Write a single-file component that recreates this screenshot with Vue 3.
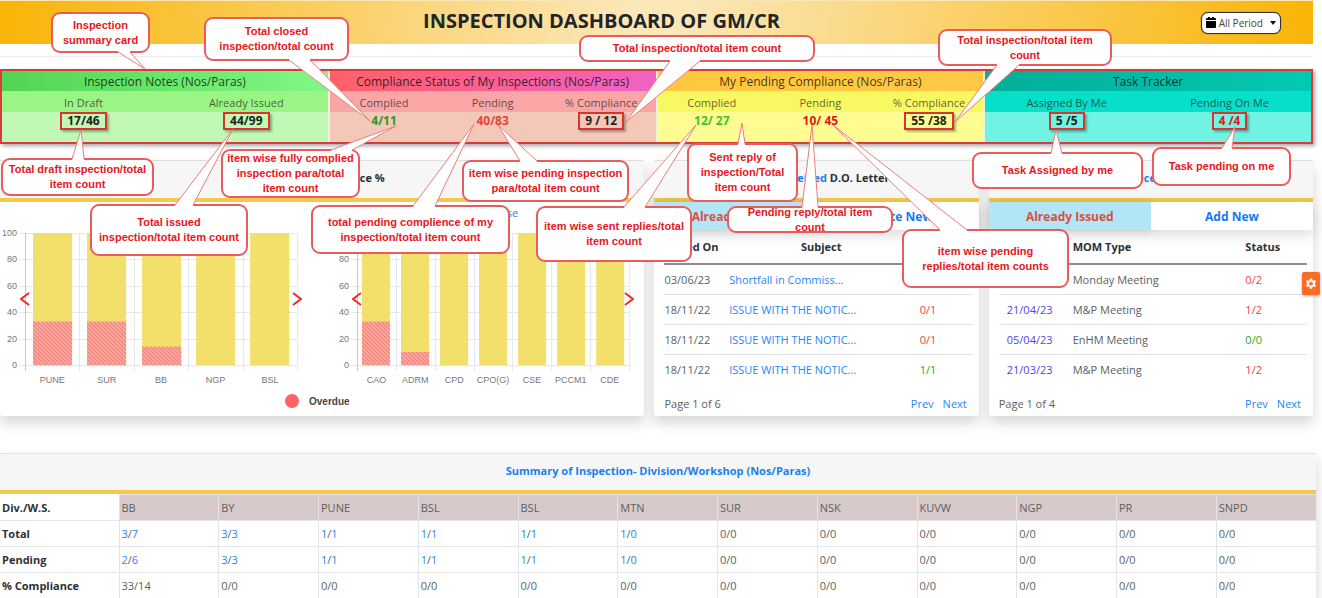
<script setup>
const cards = [
  {
    title: 'Inspection Notes (Nos/Paras)', tone: 'green',
    items: [
      { label: 'In Draft', value: '17/46', boxed: true },
      { label: 'Already Issued', value: '44/99', boxed: true },
    ],
  },
  {
    title: 'Compliance Status of My Inspections (Nos/Paras)', tone: 'pink',
    items: [
      { label: 'Complied', value: '4/11', color: 'good' },
      { label: 'Pending', value: '40/83', color: 'soft' },
      { label: '% Compliance', value: '9 / 12', boxed: true },
    ],
  },
  {
    title: 'My Pending Compliance (Nos/Paras)', tone: 'yellow',
    items: [
      { label: 'Complied', value: '12/ 27', color: 'lime' },
      { label: 'Pending', value: '10/ 45', color: 'bad' },
      { label: '% Compliance', value: '55 /38', boxed: true },
    ],
  },
  {
    title: 'Task Tracker', tone: 'teal',
    items: [
      { label: 'Assigned By Me', value: '5 /5', boxed: true },
      { label: 'Pending On Me', value: '4 /4', boxed: true, color: 'bad' },
    ],
  },
]

const plot = { left: 25, width: 272, top: 31, height: 132 }
const ticks = [100, 80, 60, 40, 20, 0]
const yOf = (v) => plot.top + plot.height * (1 - v / 100)

function makeChart(id, title, entries) {
  const step = plot.width / entries.length
  const barWidth = Math.round(step * 0.72)
  return {
    id,
    title,
    bars: entries.map(([label, overdue], i) => ({
      label,
      overdue,
      mid: plot.left + step * (i + 0.5),
      x: Math.round(plot.left + step * (i + 0.5) - barWidth / 2),
      w: barWidth,
    })),
    lines: Array.from({ length: entries.length + 1 }, (_, i) => Math.round(plot.left + step * i)),
  }
}

const charts = [
  makeChart('division', '', [['PUNE', 33], ['SUR', 33], ['BB', 14], ['NGP', 0], ['BSL', 0]]),
  makeChart('dept', 'Dept Wise', [['CAO', 33], ['ADRM', 10], ['CPD', 0], ['CPO(G)', 0], ['CSE', 0], ['PCCM1', 0], ['CDE', 0]]),
]

const letters = [
  { date: '03/06/23', subject: 'Shortfall in Commiss...', status: '', color: 'red' },
  { date: '18/11/22', subject: 'ISSUE WITH THE NOTIC...', status: '0/1', color: 'red' },
  { date: '18/11/22', subject: 'ISSUE WITH THE NOTIC...', status: '0/1', color: 'red' },
  { date: '18/11/22', subject: 'ISSUE WITH THE NOTIC...', status: '1/1', color: 'grn' },
]
const meetings = [
  { date: '', type: 'Monday Meeting', status: '0/2', color: 'red' },
  { date: '21/04/23', type: 'M&P Meeting', status: '1/2', color: 'red' },
  { date: '05/04/23', type: 'EnHM Meeting', status: '0/0', color: 'grn' },
  { date: '21/03/23', type: 'M&P Meeting', status: '1/2', color: 'red' },
]

const divisions = ['BB', 'BY', 'PUNE', 'BSL', 'BSL', 'MTN', 'SUR', 'NSK', 'KUVW', 'NGP', 'PR', 'SNPD']
const zeros = (n) => Array(n).fill('0/0')
const summary = [
  { name: 'Total', links: 6, cells: ['3/7', '3/3', '1/1', '1/1', '1/1', '1/0', ...zeros(6)] },
  { name: 'Pending', links: 6, cells: ['2/6', '3/3', '1/1', '1/1', '1/1', '1/0', ...zeros(6)] },
  { name: '% Compliance', links: 0, cells: ['33/14', ...zeros(11)] },
]

// box: left, top, right, bottom; tail: base start x, base end x, tip x, tip y
const notes = [
  { lines: ['Inspection', 'summary card'], box: [51, 12, 150, 53], tail: [118, 130, 145, 69] },
  { lines: ['Total closed', 'inspection/total count'], box: [204, 17, 349, 61], tail: [289, 310, 370, 121] },
  { lines: ['Total inspection/total item count'], box: [579, 35, 815, 62], tail: [670, 700, 626, 122] },
  { lines: ['Total inspection/total item', 'count'], box: [938, 29, 1112, 66], tail: [997, 1019, 955, 122] },
  { lines: ['Total draft inspection/total', 'item count'], box: [1, 158, 154, 196], tail: [72, 84, 81, 130], up: true },
  { lines: ['item wise fully complied', 'inspection para/total', 'item count'], box: [221, 149, 360, 198], tail: [331, 352, 396, 126], up: true },
  { lines: ['Total issued', 'inspection/total item count'], box: [90, 204, 248, 256], tail: [175, 193, 233, 129], up: true },
  { lines: ['total pending complience of my', 'inspection/total item count'], box: [311, 205, 510, 254], tail: [413, 435, 474, 124], up: true },
  { lines: ['item wise pending inspection', 'para/total item count'], box: [462, 160, 629, 202], tail: [520, 537, 498, 125], up: true },
  { lines: ['item wise sent replies/total', 'item count'], box: [536, 206, 692, 262], tail: [624, 645, 696, 125], up: true },
  { lines: ['Sent reply of', 'inspection/Total', 'item count'], box: [687, 143, 798, 202], tail: [738, 745, 742, 123], up: true },
  { lines: ['Pending reply/total item', 'count'], box: [727, 206, 893, 233], tail: [802, 818, 812, 125], up: true },
  { lines: ['item wise pending', 'replies/total item counts'], box: [902, 229, 1069, 288], tail: [940, 967, 833, 125], up: true },
  { lines: ['Task Assigned by me'], box: [972, 152, 1143, 189], tail: [1051, 1062, 1056, 130], up: true },
  { lines: ['Task pending on me'], box: [1152, 147, 1291, 186], tail: [1222, 1232, 1235, 127], up: true },
]
const boxStyle = ({ box: [l, t, r, b] }) => ({ left: `${l}px`, top: `${t}px`, width: `${r - l}px`, height: `${b - t}px` })
const baseY = (n) => (n.up ? n.box[1] + 1 : n.box[3] - 1)
const tailFill = (n) => {
  const y = baseY(n)
  const inner = n.up ? y + 2 : y - 2
  const [a, b, tx, ty] = n.tail
  return `${a},${inner} ${a},${y} ${tx},${ty} ${b},${y} ${b},${inner}`
}
const tailLine = (n) => {
  const [a, b, tx, ty] = n.tail
  return `${a},${baseY(n)} ${tx},${ty} ${b},${baseY(n)}`
}
</script>

<template>
  <div class="page">
    <header class="banner">
      <h1>INSPECTION DASHBOARD OF GM/CR</h1>
      <button type="button" class="period">
        <svg width="10" height="11" viewBox="0 0 10 11" aria-hidden="true">
          <path d="M2 0h2v1h2V0h2v1h1a1 1 0 0 1 1 1v1H0V2a1 1 0 0 1 1-1h1zM0 4h10v6a1 1 0 0 1-1 1H1a1 1 0 0 1-1-1z" />
        </svg>
        <span>All Period</span>
        <i class="caret"></i>
      </button>
    </header>
    <hr class="rule" />

    <section class="cards">
      <article v-for="c in cards" :key="c.title" class="card" :class="c.tone">
        <h2>{{ c.title }}</h2>
        <dl>
          <div v-for="it in c.items" :key="it.label" class="stat">
            <dt>{{ it.label }}</dt>
            <dd><span :class="[it.color, { boxed: it.boxed }]">{{ it.value }}</span></dd>
          </div>
        </dl>
      </article>
    </section>

    <main class="panels">
      <section class="panel">
        <h3 class="plain">Compliance %</h3>
        <div class="charts">
          <div v-for="ch in charts" :key="ch.id" class="chart">
            <svg viewBox="0 0 312 184" aria-hidden="true">
              <defs>
                <pattern :id="'hatch-' + ch.id" width="4" height="4" patternUnits="userSpaceOnUse">
                  <rect width="4" height="4" fill="#ff7f84" />
                  <path d="M-1 -1L5 5M-1 3L1 5M3 -1L5 1" stroke="#f6c0a4" stroke-width="1" />
                </pattern>
              </defs>
              <text v-if="ch.title" class="chart-title" x="160" y="15">{{ ch.title }}</text>
              <g v-for="t in ticks" :key="t">
                <line x1="19" x2="297" :y1="Math.round(yOf(t)) + 0.5" :y2="Math.round(yOf(t)) + 0.5" class="grid" />
                <text class="tick" x="17" :y="yOf(t) + 3">{{ t }}</text>
              </g>
              <line v-for="(x, i) in ch.lines" :key="x" :x1="x + 0.5" :x2="x + 0.5" y1="31" y2="169" class="grid" :class="{ axis: i === 0 }" />
              <g v-for="b in ch.bars" :key="b.label">
                <rect :x="b.x" :y="31" :width="b.w" height="132" fill="#f2df6c" />
                <rect :x="b.x" :y="yOf(b.overdue)" :width="b.w" :height="163 - yOf(b.overdue)" :fill="`url(#hatch-${ch.id})`" />
                <text class="cat" :x="b.mid" y="181">{{ b.label }}</text>
              </g>
            </svg>
            <button type="button" class="nav prev" aria-label="Previous">
              <svg width="10" height="14" viewBox="0 0 10 14"><path d="M9 1L1 7l8 6" /></svg>
            </button>
            <button type="button" class="nav next" aria-label="Next">
              <svg width="10" height="14" viewBox="0 0 10 14"><path d="M1 1l8 6-8 6" /></svg>
            </button>
          </div>
        </div>
        <p class="legend"><i></i><span>Overdue</span></p>
      </section>

      <section class="panel">
        <h3><a href="#">Issued</a>/<a href="#">Received</a> D.O. Letters</h3>
        <nav class="tabs">
          <button type="button" class="on">Already Issued</button>
          <button type="button">Create New</button>
        </nav>
        <div class="body">
          <table class="list letters">
            <thead>
              <tr><th>Issued On</th><th class="mid">Subject</th><td></td></tr>
            </thead>
            <tbody>
              <tr v-for="(r, i) in letters" :key="i">
                <td>{{ r.date }}</td>
                <td><a href="#">{{ r.subject }}</a></td>
                <td class="mid" :class="r.color">{{ r.status }}</td>
              </tr>
            </tbody>
          </table>
          <footer class="pager"><span>Page 1 of 6</span><a href="#">Prev</a><a href="#">Next</a></footer>
        </div>
      </section>

      <section class="panel">
        <h3><a href="#">Issued/Received</a> MOM</h3>
        <nav class="tabs">
          <button type="button" class="on">Already Issued</button>
          <button type="button">Add New</button>
        </nav>
        <div class="body">
          <table class="list meetings">
            <thead>
              <tr><td></td><th>MOM Type</th><th>Status</th></tr>
            </thead>
            <tbody>
              <tr v-for="(r, i) in meetings" :key="i">
                <td><a v-if="r.date" href="#" class="violet">{{ r.date }}</a></td>
                <td>{{ r.type }}</td>
                <td :class="r.color">{{ r.status }}</td>
              </tr>
            </tbody>
          </table>
          <footer class="pager"><span>Page 1 of 4</span><a href="#">Prev</a><a href="#">Next</a></footer>
        </div>
      </section>
    </main>

    <section class="panel wide">
      <h3><a href="#">Summary of Inspection- Division/Workshop (Nos/Paras)</a></h3>
      <table class="summary">
        <thead>
          <tr><th>Div./W.S.</th><td v-for="(d, i) in divisions" :key="i">{{ d }}</td></tr>
        </thead>
        <tbody>
          <tr v-for="row in summary" :key="row.name">
            <th>{{ row.name }}</th>
            <td v-for="(c, i) in row.cells" :key="i">
              <template v-if="i < row.links"><a href="#">{{ c.split('/')[0] }}</a>/<a href="#">{{ c.split('/')[1] }}</a></template>
              <template v-else>{{ c }}</template>
            </td>
          </tr>
        </tbody>
      </table>
    </section>

    <div class="notes">
      <div v-for="(n, i) in notes" :key="i" class="note" :style="boxStyle(n)">
        <span v-for="l in n.lines" :key="l">{{ l }}</span>
      </div>
      <svg class="tails" width="1" height="1" aria-hidden="true">
        <g v-for="(n, i) in notes" :key="i">
          <polygon :points="tailFill(n)" fill="#fff" />
          <polyline :points="tailLine(n)" fill="none" stroke="#ee7c7c" stroke-width="1" />
        </g>
      </svg>
    </div>

    <button type="button" class="gear" aria-label="Settings">
      <svg width="12" height="12" viewBox="0 0 24 24" aria-hidden="true">
        <path fill="#fff" fill-rule="evenodd" d="M9.8 1h4.400l.6 3.200 1.900 1.100 3.100-1.100 2.200 3.800-2.500 2.100v2.200l2.500 2.100-2.200 3.800-3.100-1.100-1.900 1.100-.6 3.200H9.800l-.6-3.200-1.900-1.100-3.100 1.100L2 14.400l2.500-2.100v-2.200L2 8l2.200-3.800 3.100 1.100 1.900-1.100zM12 7.500a3.800 3.800 0 1 0 0 7.600 3.800 3.800 0 0 0 0-7.600z" />
      </svg>
    </button>
  </div>
</template>

<style>
html { overflow: hidden; }
body { margin: 0; background: #fff; }
</style>

<style scoped>
* { box-sizing: border-box; }
.page {
  position: relative;
  font-family: "Open Sans", "Noto Sans", sans-serif;
  font-size: 11px;
  color: #5a5f64;
  padding-right: 9px;
}
a { color: #1f86f5; text-decoration: none; }
button { font-family: inherit; cursor: pointer; }
h1, h2, h3, dl, dd, p { margin: 0; }

.banner {
  display: grid;
  grid-template-columns: 1fr auto 1fr;
  align-items: center;
  height: 44px;
  border-top: 1px solid #fbe7b4;
  background: linear-gradient(100deg, #f9b406, #fbe7b8 48%, #fbe7b8 52%, #f9b406);
}
.banner h1 { grid-column: 2; padding: 0 110px 4px 0; font-size: 20px; line-height: 26px; color: #212529; }
.period {
  justify-self: end;
  display: flex;
  align-items: center;
  gap: 3px;
  height: 22px;
  margin-right: 32px;
  padding: 0 4px;
  border: 1px solid #333;
  border-radius: 7px;
  background: #fff;
  color: #444;
  font-size: 10px;
  box-shadow: 0 0 1px #333;
}
.caret { border: 3px solid transparent; border-top: 4px solid #111; border-bottom: 0; margin-left: 4px; }
.rule { height: 1px; margin: 12px 0 12px; border: 0; background: #ececec; }

.cards {
  display: grid;
  grid-template-columns: repeat(4, 1fr);
  gap: 2px;
  border: 2px solid #d93a3a;
  box-shadow: 2px 2px 4px rgba(0, 0, 0, 0.35);
  background: #e8f2e0;
}
.card h2 { height: 20px; text-align: center; font-size: 12px; line-height: 22px; font-weight: 500; color: rgba(0, 0, 0, 0.75); }
.card dl { display: grid; grid-auto-flow: column; grid-auto-columns: 1fr; }
.stat { text-align: center; }
.stat dt { height: 21px; font-size: 11px; line-height: 24px; color: rgba(30, 30, 30, 0.72); }
.stat dd { height: 30px; display: flex; justify-content: center; align-items: flex-start; }
.stat span { font-weight: 700; font-size: 12px; line-height: 18px; color: #222; white-space: pre; }
.stat .boxed { border: 2px solid #d9352c; padding: 0 5px; line-height: 14px; box-shadow: 2px 2px 2px rgba(0, 0, 0, 0.3); }
.stat .good { color: #2f9420; }
.stat .soft { color: #e4433f; }
.stat .lime { color: #3ec32a; }
.stat .bad { color: #dc1a12; }
.green h2 { background: linear-gradient(90deg, #52d452, #80f886); }
.green dt { background: #9bf584; }
.green dd { background: #c1f8b5; }
.pink h2 { background: linear-gradient(90deg, #ff6068, #f062c4); }
.pink dt { background: #fba6a6; }
.pink dd { background: #f4c8b8; }
.yellow h2 { background: linear-gradient(90deg, #ffc83e, #fdc945); }
.yellow dt { background: #f8f862; }
.yellow dd { background: #fffd92; }
.teal h2 { background: linear-gradient(90deg, #02ae9a, #02c9b2); }
.teal dt { background: #07dfc8; }
.teal dd { background: #70f3e2; }

.panels { display: grid; grid-template-columns: 644fr 324fr 324fr; gap: 10px; margin-top: 16px; }
.panel {
  border-radius: 3px;
  background: #fff;
  box-shadow: 0 7px 14px rgba(0, 0, 0, 0.17);
}
.panel h3 {
  height: 42px;
  border-top: 1px solid #e0e0e0;
  border-bottom: 4px solid #f2c94c;
  background: #f6f6f6;
  text-align: center;
  font-size: 11px;
  line-height: 33px;
  font-weight: 700;
  color: #2a2e33;
}
.panel h3 a { color: #1a80f0; }
.panel .plain { padding-left: 48px; }

.charts { display: grid; grid-template-columns: 332fr 312fr; }
.chart { position: relative; }
.chart:first-child { margin-right: 20px; }
.chart > svg { display: block; width: 100%; }
.chart text { font-family: "Liberation Sans", Arial, sans-serif; font-size: 9px; fill: #777; }
.chart .chart-title { font-family: "Open Sans", sans-serif; font-size: 11px; text-anchor: middle; fill: #2b87e8; }
.chart .tick { text-anchor: end; }
.chart .cat { text-anchor: middle; }
.grid { stroke: #e6e6e6; }
.grid.axis { stroke: #c8c8c8; }
.nav { position: absolute; top: 90px; padding: 0; border: 0; background: none; line-height: 0; }
.nav path { fill: none; stroke: #f02a2a; stroke-width: 2; }
.prev { left: 20px; }
.next { right: 10px; }
.legend {
  display: flex;
  align-items: center;
  gap: 10px;
  height: 30px;
  padding-left: 285px;
  font-family: "Liberation Sans", Arial, sans-serif;
  font-size: 10px;
  font-weight: 700;
  color: #444;
}
.legend i { width: 14px; height: 14px; border-radius: 50%; background: #ff6264; }

.tabs { display: grid; grid-template-columns: 1fr 1fr; box-shadow: 0 5px 14px rgba(0, 0, 0, 0.14); }
.tabs button { height: 28px; padding: 0; border: 0; background: #fff; font-size: 12px; font-weight: 700; color: #0f7bf5; }
.tabs .on { background: #b2e5f6; color: #d9503e; box-shadow: 2px 0 8px rgba(0, 0, 0, 0.12); }
.body { padding: 0 6px 0 10px; }
.list { width: 100%; border-collapse: collapse; table-layout: fixed; }
.list th { height: 34px; padding: 0; text-align: left; font-size: 11px; font-weight: 700; color: #2c3035; }
.list td { height: 30px; padding: 0; font-size: 11px; border-bottom: 1px solid #dfe3e6; white-space: nowrap; }
.list thead th, .list thead td { border-bottom: 2px solid #8b8e91; }
.list tbody tr:last-child td { border-bottom: 0; }
.list .mid { text-align: center; }
.letters th:nth-child(1) { width: 21%; }
.letters thead td { width: 29%; }
.letters th.mid { padding-left: 30px; }
.meetings thead td { width: 24%; }
.meetings th:nth-child(3) { width: 20%; }
.meetings td:first-child { padding-left: 8px; }
.list .red { color: #ef4248; }
.list .grn { color: #2aa52a; }
.list .violet { color: #5546e0; }
.pager { display: flex; gap: 9px; height: 31px; padding-right: 6px; font-size: 11px; line-height: 39px; }
.pager span { flex: 1; }

.wide { margin: 37px -3px 0 0; }
.wide h3 { height: 41px; line-height: 33px; }
.summary { width: 100%; border-collapse: collapse; table-layout: fixed; border-bottom: 1px solid #dcdcdc; }
.summary th { width: 119px; padding: 0 2px; text-align: left; font-size: 11px; font-weight: 700; color: #2c3035; }
.summary td { height: 26px; padding: 0 2px; border: 1px solid #e3e5e8; border-right: 0; font-size: 11px; }
.summary th { border-bottom: 1px solid #e3e5e8; }
.summary thead td { background: #d9caca; }

.notes { position: absolute; left: 0; top: 0; }
.note {
  position: absolute;
  display: flex;
  flex-direction: column;
  align-items: center;
  justify-content: center;
  border: 2px solid #ea5c5c;
  border-radius: 9px;
  background: #fff;
  font-family: "Liberation Sans", Arial, sans-serif;
  font-size: 11px;
  line-height: 15px;
  font-weight: 700;
  color: #e8161d;
  white-space: nowrap;
}
.tails { position: absolute; left: 0; top: 0; overflow: visible; }
.gear {
  position: absolute;
  right: 2px;
  top: 272px;
  width: 18px;
  height: 23px;
  padding: 0;
  border: 0;
  border-radius: 2px;
  background: #fb6d26;
  box-shadow: 0 1px 3px rgba(0, 0, 0, 0.3);
  display: grid;
  place-items: center;
}
</style>
